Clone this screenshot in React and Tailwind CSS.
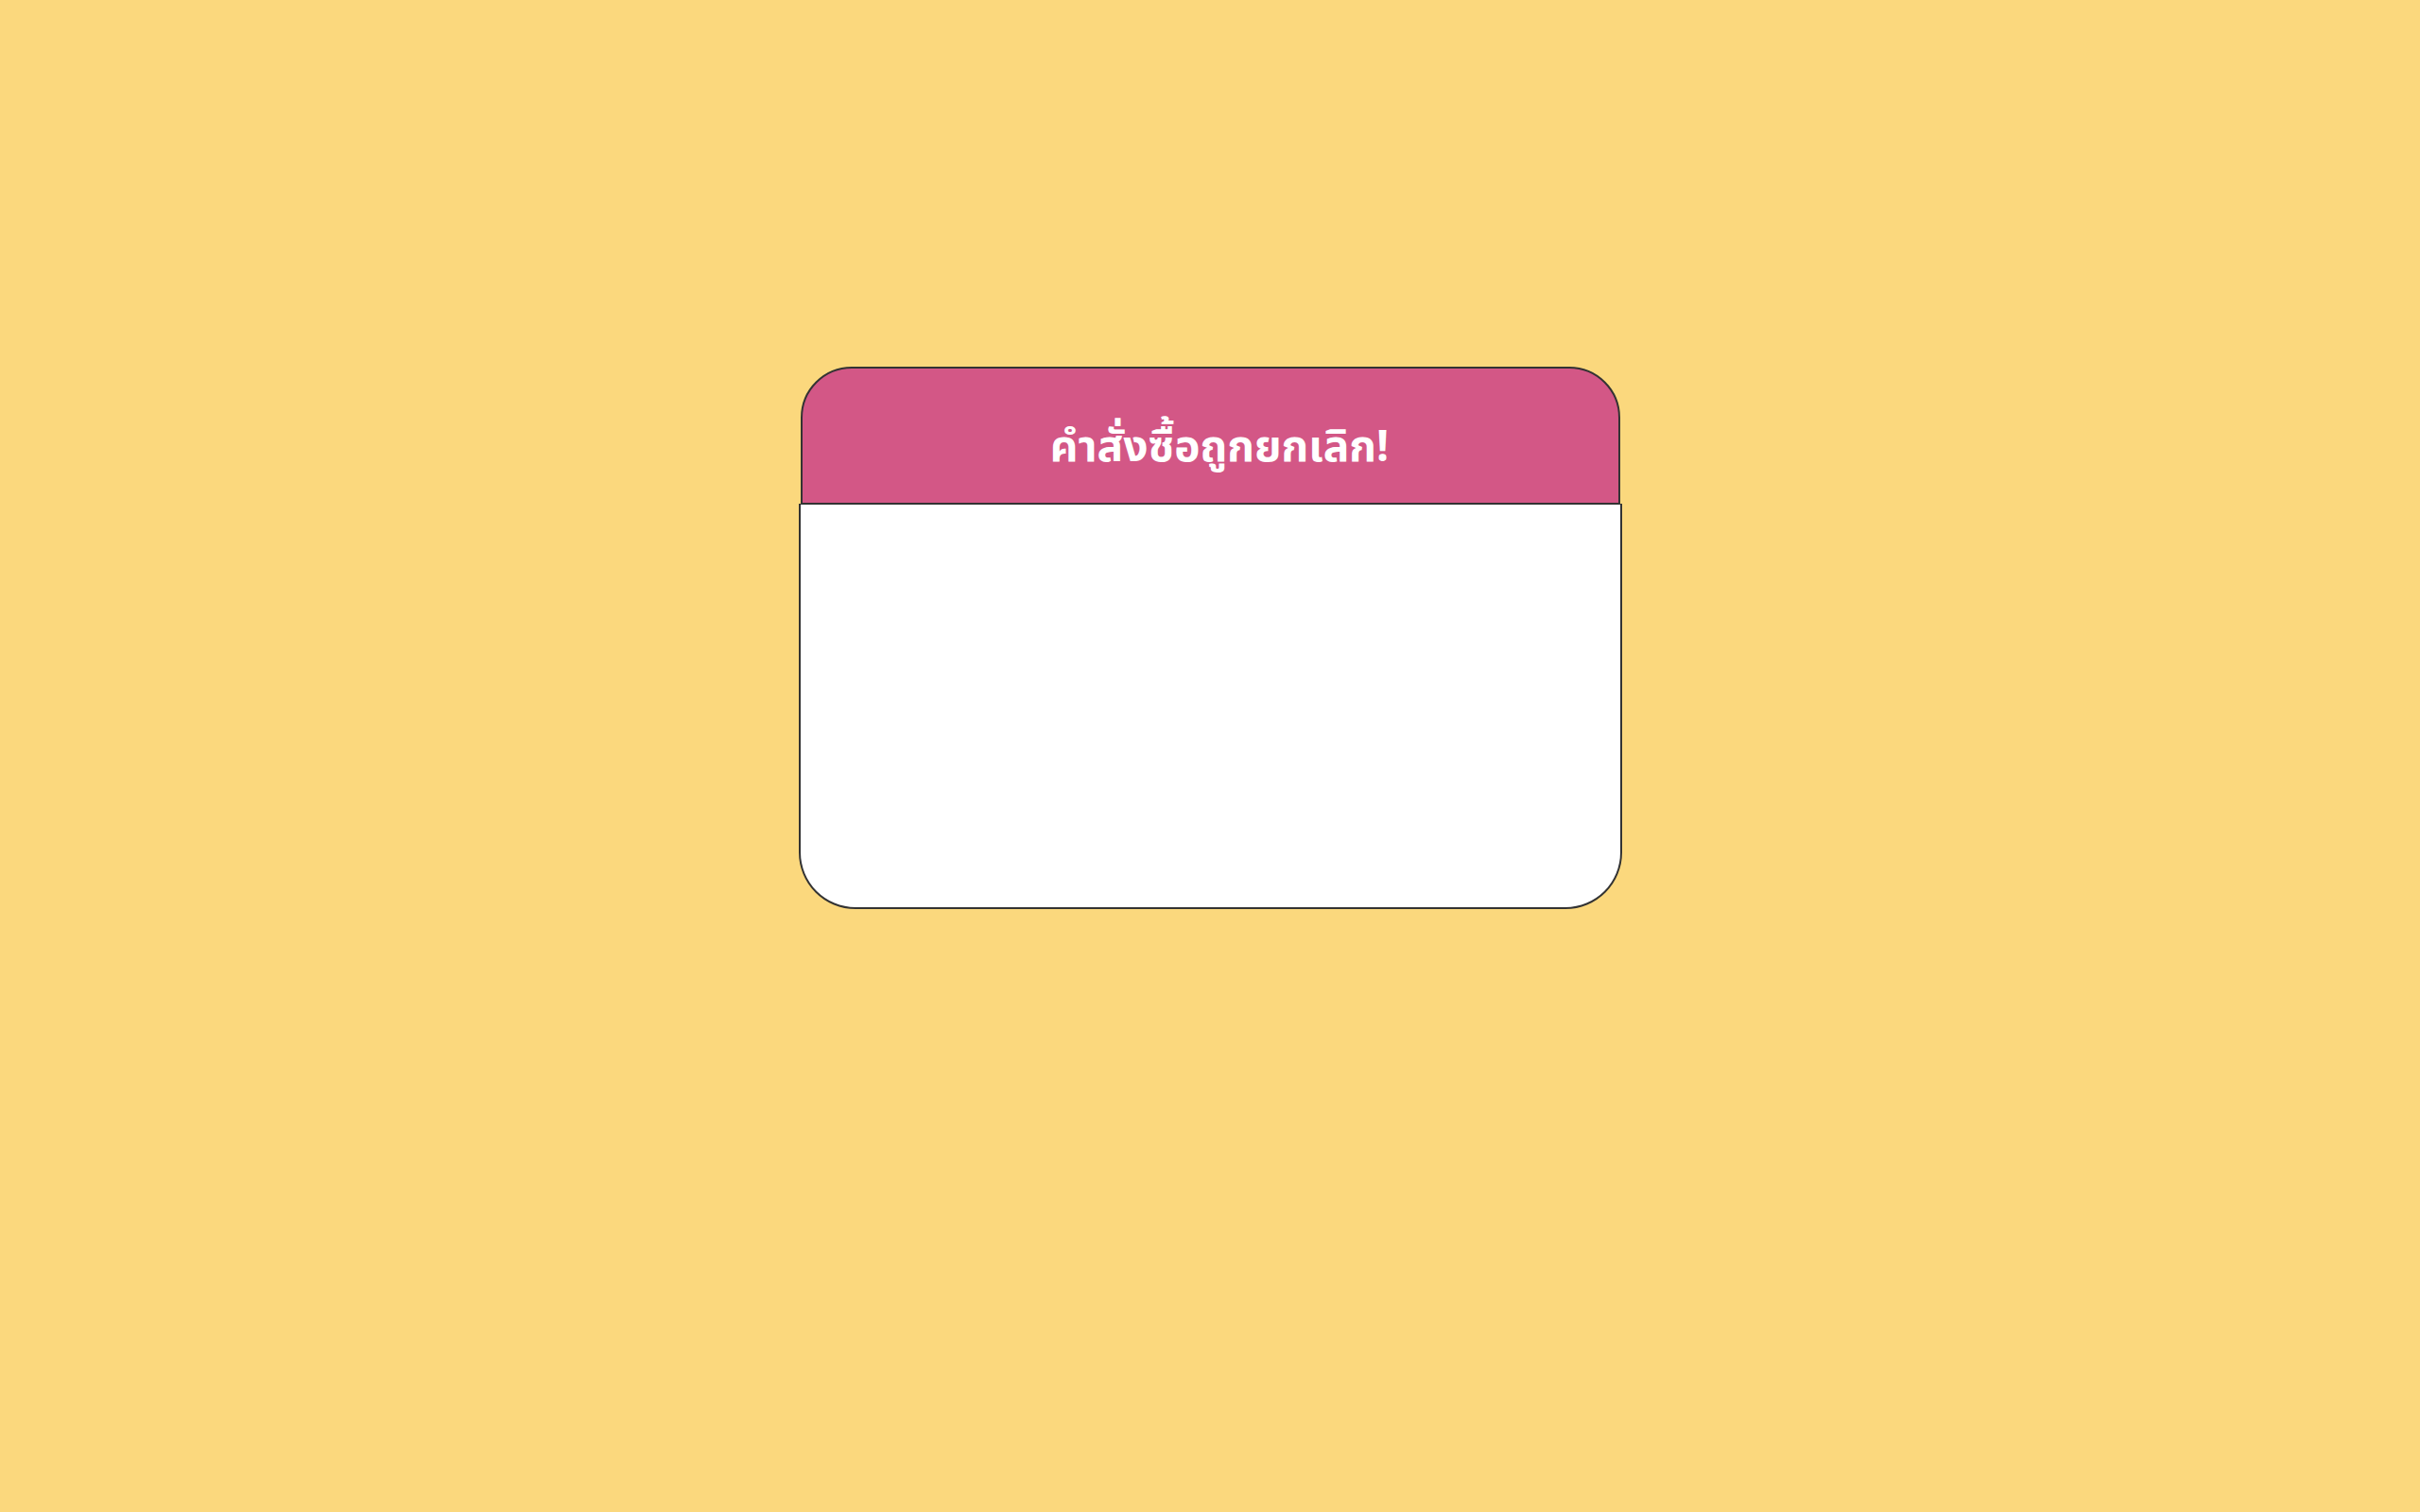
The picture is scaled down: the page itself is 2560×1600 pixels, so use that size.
export default function App() {
  return (
    <div className="min-h-screen w-full bg-[#fbd87d] flex justify-center pt-[388px]" style={{ fontFamily: '"Noto Sans Thai", "Noto Sans", sans-serif' }}>
      <div className="flex flex-col items-center w-[871px]">
        <div className="w-[867px] h-[146px] bg-[#d35786] border-2 border-[#333333] rounded-t-[54px] flex items-center justify-center">
          <h2 className="text-white font-bold text-[46px] leading-none pt-[26px] pl-[20px]">คำสั่งซื้อถูกยกเลิก!</h2>
        </div>
        <div className="w-[871px] h-[429px] -mt-px bg-white border-2 border-t border-[#333333] rounded-b-[60px]" />
      </div>
    </div>
  );
}
